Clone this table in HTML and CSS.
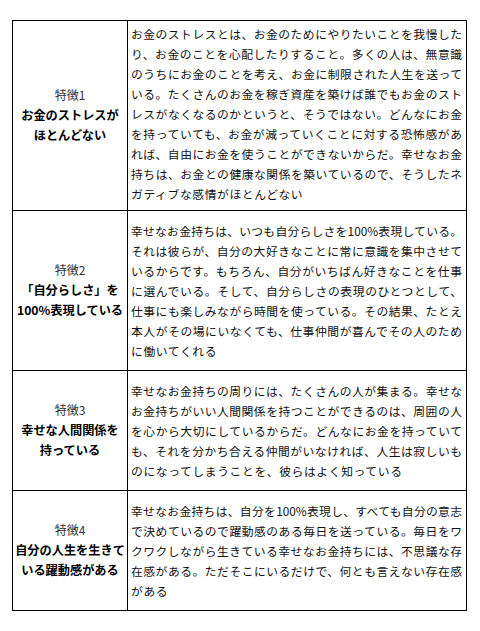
FILE: index.html
```html
<!DOCTYPE html>
<html lang="ja">
<head>
<meta charset="utf-8">
<title>幸せなお金持ちの特徴</title>
<link rel="stylesheet" href="styles.css">
</head>
<body>
<table class="features">
  <tr class="r1">
    <th class="label"><span class="num">特徴1</span><span class="title">お金のストレスが<br>ほとんどない</span></th>
    <td class="desc">
      <span class="ln">お金のストレスとは、お金のためにやりたいことを我慢した</span>
      <span class="ln">り、お金のことを心配したりすること。多くの人は、無意識</span>
      <span class="ln">のうちにお金のことを考え、お金に制限された人生を送って</span>
      <span class="ln">いる。たくさんのお金を稼ぎ資産を築けば誰でもお金のスト</span>
      <span class="ln">レスがなくなるのかというと、そうではない。どんなにお金</span>
      <span class="ln">を持っていても、お金が減っていくことに対する恐怖感があ</span>
      <span class="ln">れば、自由にお金を使うことができないからだ。幸せなお金</span>
      <span class="ln">持ちは、お金との健康な関係を築いているので、そうしたネ</span>
      <span class="ln end">ガティブな感情がほとんどない</span>
    </td>
  </tr>
  <tr class="r2">
    <th class="label"><span class="num">特徴2</span><span class="title">「自分らしさ」を<br>100%表現している</span></th>
    <td class="desc">
      <span class="ln">幸せなお金持ちは、いつも自分らしさを100%表現している。</span>
      <span class="ln">それは彼らが、自分の大好きなことに常に意識を集中させて</span>
      <span class="ln">いるからです。もちろん、自分がいちばん好きなことを仕事</span>
      <span class="ln">に選んでいる。そして、自分らしさの表現のひとつとして、</span>
      <span class="ln">仕事にも楽しみながら時間を使っている。その結果、たとえ</span>
      <span class="ln">本人がその場にいなくても、仕事仲間が喜んでその人のため</span>
      <span class="ln end">に働いてくれる</span>
    </td>
  </tr>
  <tr class="r3">
    <th class="label"><span class="num">特徴3</span><span class="title">幸せな人間関係を<br>持っている</span></th>
    <td class="desc">
      <span class="ln">幸せなお金持ちの周りには、たくさんの人が集まる。幸せな</span>
      <span class="ln">お金持ちがいい人間関係を持つことができるのは、周囲の人</span>
      <span class="ln">を心から大切にしているからだ。どんなにお金を持っていて</span>
      <span class="ln">も、それを分かち合える仲間がいなければ、人生は寂しいも</span>
      <span class="ln end">のになってしまうことを、彼らはよく知っている</span>
    </td>
  </tr>
  <tr class="r4">
    <th class="label"><span class="num">特徴4</span><span class="title">自分の人生を生きて<br>いる躍動感がある</span></th>
    <td class="desc">
      <span class="ln">幸せなお金持ちは、自分を100%表現し、すべても自分の意志</span>
      <span class="ln">で決めているので躍動感のある毎日を送っている。毎日をワ</span>
      <span class="ln">クワクしながら生きている幸せなお金持ちには、不思議な存</span>
      <span class="ln">在感がある。ただそこにいるだけで、何とも言えない存在感</span>
      <span class="ln end">がある</span>
    </td>
  </tr>
</table>
</body>
</html>
```

FILE: styles.css
```css
html, body {
  margin: 0;
  padding: 0;
  background: #fff;
}

body {
  font-family: "Noto Sans CJK JP", "Noto Sans", sans-serif;
  color: #111;
}

.features {
  border-collapse: collapse;
  margin: 20px 0 0 12px;
  table-layout: fixed;
  width: 455px;
}

.features th,
.features td {
  border: 1px solid #000;
  vertical-align: middle;
}

.label {
  width: 114px;
  padding: 0;
  text-align: center;
  font-weight: normal;
  white-space: nowrap;
}

.num {
  display: block;
  font-size: 12px;
  line-height: 20px;
  color: #333;
  margin-top: -1px;
}

.title {
  display: block;
  font-size: 12.2px;
  line-height: 20px;
  font-weight: bold;
  color: #000;
}

.desc {
  padding: 3px 4px 3px 3px;
  font-size: 11.8px;
  line-height: 20px;
  text-align: left;
}

.r1 .desc {
  padding-top: 1px;
  padding-bottom: 5px;
}

.ln {
  display: block;
  text-align: justify;
  text-align-last: justify;
  text-justify: inter-character;
}

.ln.end {
  text-align: left;
  text-align-last: left;
  letter-spacing: 0.6px;
}

.r1 { height: 190px; }
.r2 { height: 160px; }
.r3 { height: 120px; }
.r4 { height: 120px; }
```
